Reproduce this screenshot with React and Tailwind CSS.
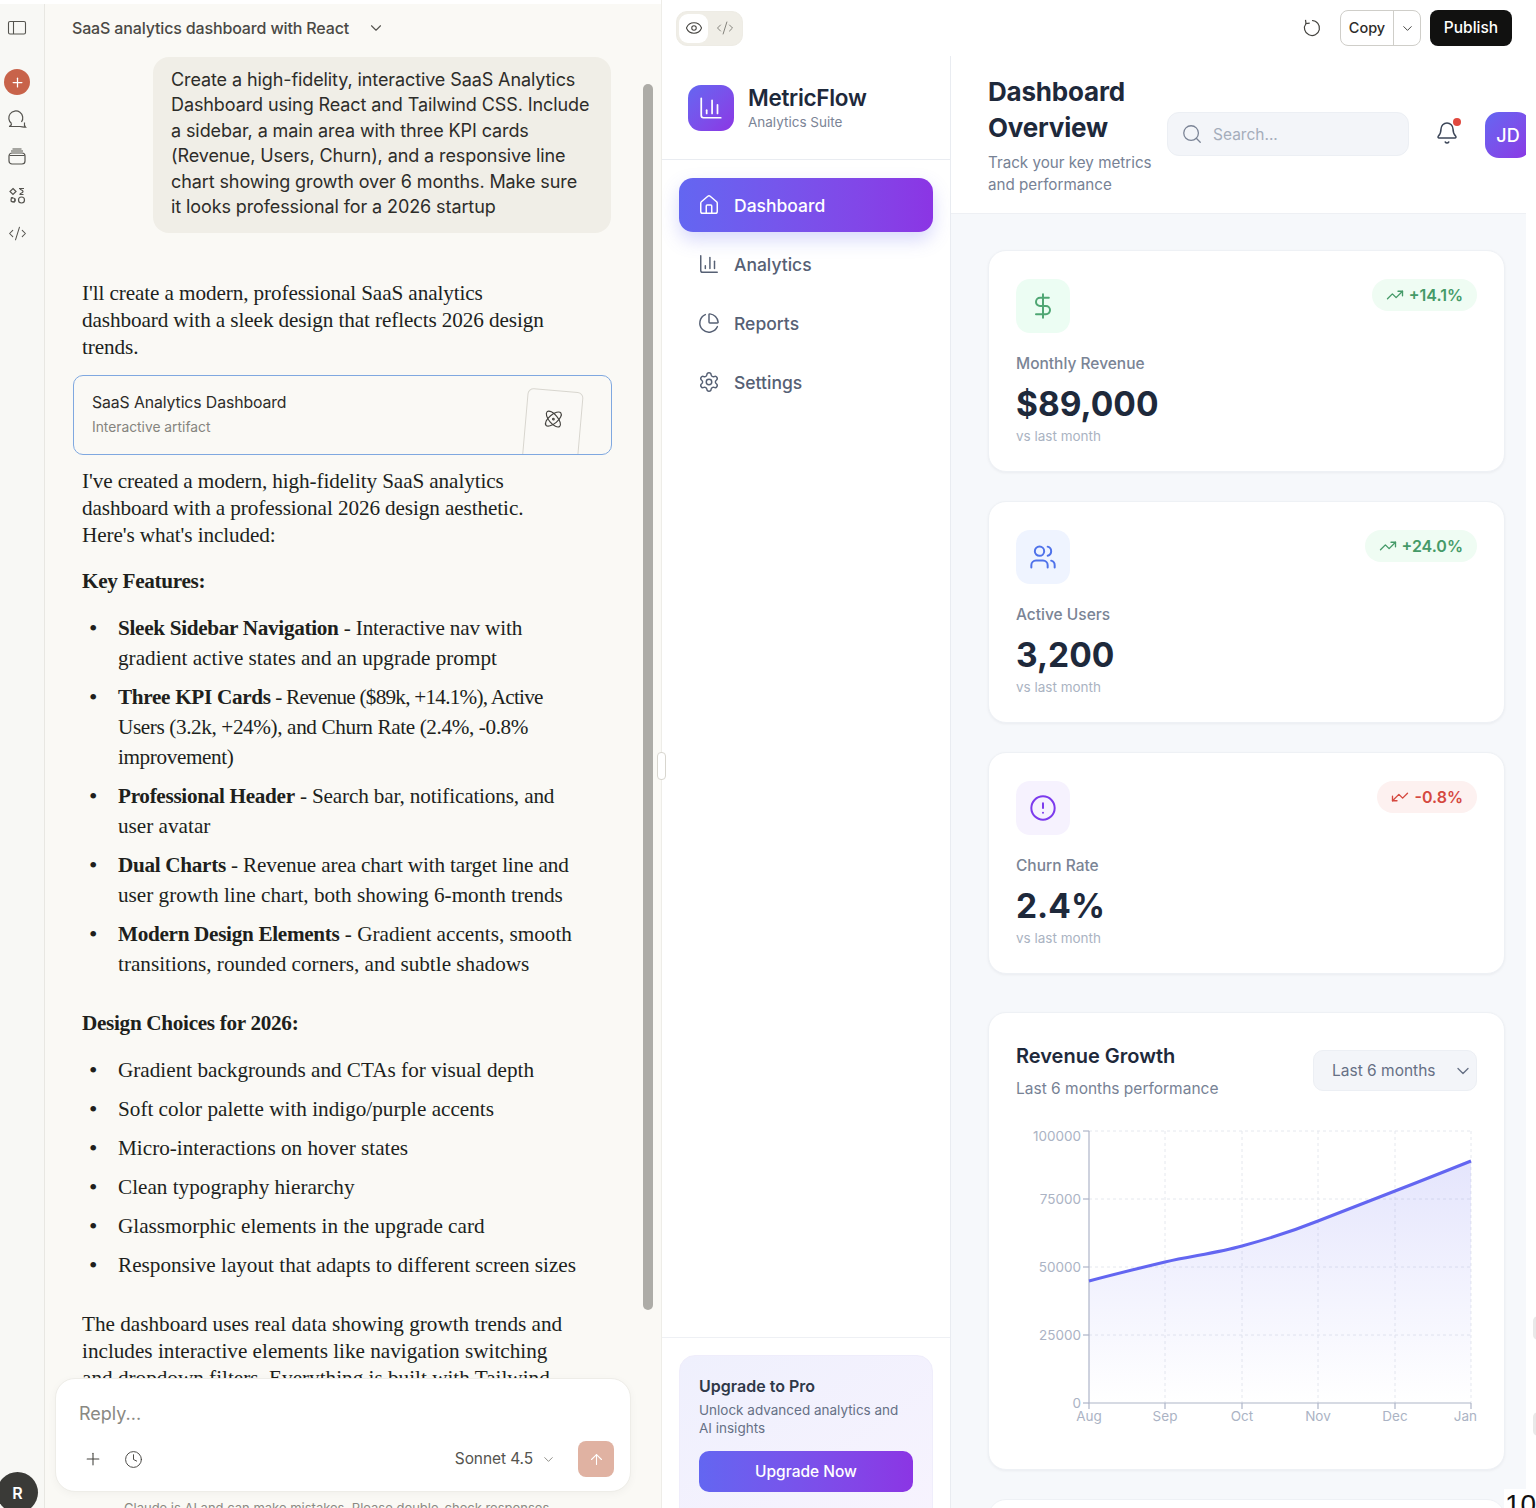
import {
  Atom,
  BarChart3,
  Bell,
  ChevronDown,
  Clock,
  CodeXml,
  DollarSign,
  Eye,
  Home,
  PieChart,
  Plus,
  ArrowUp,
  Search,
  Settings,
  TrendingDown,
  TrendingUp,
  Users,
  AlertCircle,
} from 'lucide-react'

const SERIF = 'font-["Liberation_Serif",serif]'
const SERIF_BOLD = 'font-bold tracking-[-0.31px]'

const promptLines = [
  'Create a high-fidelity, interactive SaaS Analytics',
  'Dashboard using React and Tailwind CSS. Include',
  'a sidebar, a main area with three KPI cards',
  '(Revenue, Users, Churn), and a responsive line',
  'chart showing growth over 6 months. Make sure',
  'it looks professional for a 2026 startup',
]

// tight: the reference's old-style figures run narrower than Liberation's
const features = [
  { bold: 'Sleek Sidebar Navigation', first: ' - Interactive nav with', lead: 'tracking-[-0.15px]', lines: ['gradient active states and an upgrade prompt'], rest: '' },
  { bold: 'Three KPI Cards', first: ' - Revenue ($89k, +14.1%), Active', lead: 'tracking-[-0.75px]', lines: ['Users (3.2k, +24%), and Churn Rate (2.4%, -0.8%', 'improvement)'], rest: 'tracking-[-0.38px]' },
  { bold: 'Professional Header', first: ' - Search bar, notifications, and', lead: 'tracking-[-0.15px]', lines: ['user avatar'], rest: '' },
  { bold: 'Dual Charts', first: ' - Revenue area chart with target line and', lead: 'tracking-[-0.15px]', lines: ['user growth line chart, both showing 6-month trends'], rest: '' },
  { bold: 'Modern Design Elements', first: ' - Gradient accents, smooth', lead: '', lines: ['transitions, rounded corners, and subtle shadows'], rest: '' },
]

const choices = [
  'Gradient backgrounds and CTAs for visual depth',
  'Soft color palette with indigo/purple accents',
  'Micro-interactions on hover states',
  'Clean typography hierarchy',
  'Glassmorphic elements in the upgrade card',
  'Responsive layout that adapts to different screen sizes',
]

const kpis = [
  { label: 'Monthly Revenue', value: '$89,000', change: '+14.1%', Icon: DollarSign, box: 'bg-[#ecfdf3]', icon: 'text-[#4fa673]', pill: 'bg-[#effcf3] text-[#459a68]', Trend: TrendingUp, trendClass: '' },
  { label: 'Active Users', value: '3,200', change: '+24.0%', Icon: Users, box: 'bg-[#eff4ff]', icon: 'text-[#4f72ea]', pill: 'bg-[#effcf3] text-[#459a68]', Trend: TrendingUp, trendClass: '' },
  { label: 'Churn Rate', value: '2.4%', change: '-0.8%', Icon: AlertCircle, box: 'bg-[#f6f2fe]', icon: 'text-[#7c3aed]', pill: 'bg-[#fdf1f0] text-[#d5483f]', Trend: TrendingDown, trendClass: '-scale-x-100' },
]

const navItems = [
  { label: 'Analytics', Icon: BarChart3 },
  { label: 'Reports', Icon: PieChart },
  { label: 'Settings', Icon: Settings },
]

function Bullet({ children }) {
  return (
    <li className="flex">
      <span className="w-[36px] shrink-0 pl-[7px] text-[24px] leading-[30px]">•</span>
      <div className="whitespace-nowrap">{children}</div>
    </li>
  )
}

function Rail() {
  return (
    <div className="w-[45px] shrink-0 h-full bg-[#f8f8f5] border-r border-[#e8e7e2] flex flex-col items-center pr-[10px] text-[#55544f]">
      <svg className="mt-[14px]" width="20" height="20" viewBox="0 0 20 20" fill="none" stroke="currentColor" strokeWidth="1.1">
        <rect x="1.5" y="3.5" width="17" height="12.5" rx="1.5" />
        <path d="M6.5 3.5V16" />
      </svg>
      <div className="mt-[31px] w-[26px] h-[26px] rounded-full bg-[#c8634a] flex items-center justify-center">
        <Plus size={15} className="text-white" strokeWidth={2} />
      </div>
      <svg className="mt-[14px]" width="20" height="20" viewBox="0 0 20 20" fill="none" stroke="currentColor" strokeWidth="1.2">
        <path d="M4.5 14.5A7 7 0 1 1 14.5 13" />
        <path d="M2 17.5c1.6-.3 2.5-1.5 2.5-3M2 17.5h11c1.5 0 3.5.7 5.5.7-1-1-1.3-3-1-4.7" />
      </svg>
      <svg className="mt-[18px]" width="20" height="20" viewBox="0 0 20 20" fill="none" stroke="currentColor" strokeWidth="1.2">
        <rect x="2" y="6" width="16" height="11" rx="3" />
        <path d="M2.5 8.5h15M4 4h12M5.5 2h9" />
      </svg>
      <svg className="mt-[19px]" width="20" height="20" viewBox="0 0 20 20" fill="none" stroke="currentColor" strokeWidth="1.2">
        <path d="M6 2.5 9 5.5 6 8.5 3 5.5Z" />
        <path d="M12 2.5h5M12.5 8.5h4M13 2.5c0 2 3 1 3 3s-3 1-3 3" />
        <circle cx="6" cy="14" r="2" />
        <path d="M4 12.5a1.5 1.5 0 0 1 2-.8M8 12.5v3M3.8 15.5l4.2.5" />
        <circle cx="14.5" cy="14" r="3" />
      </svg>
      <CodeXml className="mt-[18px]" size={19} strokeWidth={1.3} />
    </div>
  )
}

function ChatPanel() {
  return (
    <div className="relative flex-1 h-full bg-[#faf9f5] overflow-hidden text-[#1f1e1b]">
      <div className="h-[53px] pb-[6px] flex items-center pl-[27px] font-['Inter',sans-serif] text-[#4a4945]">
        <span className="text-[16px] font-medium tracking-[-0.15px]">SaaS analytics dashboard with React</span>
        <ChevronDown className="ml-[18px] text-[#55544f]" size={18} strokeWidth={1.5} />
      </div>

      <div className="pl-[37px] pr-[49px]">
        <div className="ml-[71px] w-[458px] pl-[18px] pt-[10px] pb-[14px] bg-[#f0eee7] rounded-[16px] font-['Inter',sans-serif] text-[18px] leading-[25.4px] text-[#2d2c29] whitespace-nowrap tracking-[-0.1px]">
          {promptLines.map((l) => (
            <div key={l}>{l}</div>
          ))}
        </div>

        <div className={`${SERIF} text-[21.2px] text-[#201f1c]`}>
          <p className="mt-[47px] leading-[27px] whitespace-nowrap tracking-[-0.1px]">
            I'll create a modern, professional SaaS analytics
            <br />
            dashboard with a sleek design that reflects 2026 design
            <br />
            trends.
          </p>

          <div className="relative mt-[14px] -ml-[9px] w-[539px] h-[80px] rounded-[10px] border border-[#7fa8e0] overflow-hidden font-['Inter',sans-serif]">
            <div className="pl-[18px] pt-[17px] text-[15.8px] leading-[20px] text-[#2d2c29] tracking-[-0.1px]">SaaS Analytics Dashboard</div>
            <div className="pl-[18px] mt-[5px] text-[13.8px] leading-[18px] text-[#85847e]">Interactive artifact</div>
            <div className="absolute left-[450px] top-[14px] w-[56px] h-[90px] rotate-[5deg] rounded-[6px] border border-[#d8d6cf] bg-[#faf9f6] flex justify-center pt-[18px]">
              <Atom size={20} strokeWidth={1.4} className="text-[#44433f]" />
            </div>
          </div>

          <p className="mt-[13px] leading-[27px] whitespace-nowrap tracking-[-0.1px]">
            I've created a modern, high-fidelity SaaS analytics
            <br />
            dashboard with a professional 2026 design aesthetic.
            <br />
            Here's what's included:
          </p>

          <p className={`mt-[19px] leading-[27px] ${SERIF_BOLD}`}>Key Features:</p>

          <ul className="mt-[18px] flex flex-col gap-[9px] leading-[30px]">
            {features.map((f) => (
              <Bullet key={f.bold}>
                <b className={SERIF_BOLD}>{f.bold}</b>
                <span className={f.lead}>{f.first}</span>
                {f.lines.map((l) => (
                  <div key={l} className={f.rest}>{l}</div>
                ))}
              </Bullet>
            ))}
          </ul>

          <p className={`mt-[31px] leading-[27px] ${SERIF_BOLD}`}>Design Choices for 2026:</p>

          <ul className="mt-[18px] flex flex-col gap-[9px] leading-[30px]">
            {choices.map((c) => (
              <Bullet key={c}>{c}</Bullet>
            ))}
          </ul>

          <p className="mt-[31px] leading-[27px] whitespace-nowrap">
            The dashboard uses real data showing growth trends and
            <br />
            includes interactive elements like navigation switching
            <br />
            and dropdown filters. Everything is built with Tailwind
          </p>
        </div>
      </div>

      {/* scrollbar sits over the conversation */}
      <div className="absolute left-[598px] top-[80px] w-[10px] h-[1226px] rounded-full bg-[#adaca7]" />

      <div className="absolute left-[10px] top-[1374px] w-[576px] h-[114px] rounded-[20px] bg-white border border-[#eeede8] shadow-[0_2px_8px_rgba(0,0,0,0.04)] font-['Inter',sans-serif]">
        <div className="pl-[23px] pt-[23px] text-[18px] leading-[24px] text-[#8a8983]">Reply...</div>
        <div className="mt-[15px] pl-[27px] pr-[16px] flex items-center">
          <Plus size={20} strokeWidth={1.3} className="text-[#44433f]" />
          <Clock size={19} strokeWidth={1.2} className="ml-[21px] text-[#44433f]" />
          <span className="ml-auto text-[15.5px] text-[#55544f] tracking-[-0.1px]">Sonnet 4.5</span>
          <ChevronDown size={15} strokeWidth={1.3} className="ml-[8px] text-[#77766f]" />
          <div className="ml-[22px] w-[36px] h-[36px] rounded-[8px] bg-[#e0b2a2] flex items-center justify-center">
            <ArrowUp size={17} strokeWidth={1.5} className="text-white" />
          </div>
        </div>
      </div>
      <div className="absolute left-[79px] top-[1495px] text-[13px] leading-[18px] text-[#8a8983] font-['Inter',sans-serif] whitespace-nowrap">
        Claude is AI and can make mistakes. Please double-check responses.
      </div>
    </div>
  )
}

function TopBar() {
  return (
    <div className="h-[56px] shrink-0 bg-white flex items-center pl-[14px] pr-[24px] font-['Inter',sans-serif]">
      <div className="w-[67px] h-[35px] rounded-[11px] bg-[#f0eee7] border border-[#eeece5] flex items-center pl-[2px]">
        <div className="w-[29px] h-[29px] rounded-[9px] bg-white flex items-center justify-center">
          <Eye size={18} strokeWidth={1.4} className="text-[#44433f]" />
        </div>
        <CodeXml size={18} strokeWidth={1.2} className="ml-[8px] text-[#77766f]" />
      </div>
      <svg className="ml-auto text-[#44433f]" width="20" height="20" viewBox="0 0 20 20" fill="none" stroke="currentColor" strokeWidth="1.2">
        <path d="M10 2.5a7.5 7.5 0 1 1-6 3" />
        <path d="M3.5 1.8 4 5.5l3.7-.4" />
      </svg>
      <div className="ml-[18px] w-[81px] h-[36px] rounded-[8px] border border-[#cfcec9] flex text-[#2d2c29]">
        <div className="w-[53px] flex items-center justify-center text-[14.5px] font-medium border-r border-[#cfcec9]">Copy</div>
        <div className="flex-1 flex items-center justify-center">
          <ChevronDown size={15} strokeWidth={1.4} />
        </div>
      </div>
      <div className="ml-[9px] w-[82px] h-[36px] rounded-[8px] bg-[#111110] text-white flex items-center justify-center text-[15.5px] font-medium">Publish</div>
    </div>
  )
}

function Sidebar() {
  return (
    <div className="w-[289px] shrink-0 bg-white border-r border-[#e9ecf1] flex flex-col">
      <div className="h-[104px] shrink-0 border-b border-[#e9ecf1] flex items-center pl-[26px]">
        <div className="w-[46px] h-[46px] rounded-[13px] bg-gradient-to-br from-[#6366f1] to-[#8b35e4] flex items-center justify-center">
          <BarChart3 size={26} strokeWidth={1.6} className="text-white" />
        </div>
        <div className="ml-[14px]">
          <div className="text-[22.5px] leading-[28px] font-semibold text-[#1e293b] tracking-[-0.3px]">MetricFlow</div>
          <div className="text-[13.5px] leading-[18px] mt-[1px] text-[#7b8496]">Analytics Suite</div>
        </div>
      </div>

      <nav className="flex-1 px-[17px] pt-[18px] flex flex-col gap-[5px]">
        <div className="h-[54px] rounded-[14px] bg-gradient-to-r from-[#6366f1] to-[#8b35e4] shadow-[0_8px_18px_rgba(99,102,241,0.25)] flex items-center pl-[19px] text-white">
          <Home size={22} strokeWidth={1.6} />
          <span className="ml-[14px] mt-[2px] text-[17.5px] font-medium">Dashboard</span>
        </div>
        {navItems.map(({ label, Icon }) => (
          <div key={label} className="h-[54px] flex items-center pl-[19px] text-[#566074]">
            <Icon size={22} strokeWidth={1.6} />
            <span className="ml-[14px] mt-[2px] text-[17.5px] font-medium">{label}</span>
          </div>
        ))}
      </nav>

      <div className="h-[171px] shrink-0 border-t border-[#eef0f4] px-[17px] pt-[17px]">
        <div className="h-[170px] rounded-[16px] border border-[#efedfb] bg-gradient-to-br from-[#eff0fd] to-[#f7f3fe] px-[19px] pt-[20px]">
          <div className="text-[16px] leading-[20px] font-semibold text-[#2f3848]">Upgrade to Pro</div>
          <div className="mt-[5px] text-[13.5px] leading-[18px] text-[#667085]">
            Unlock advanced analytics and
            <br />
            AI insights
          </div>
          <div className="mt-[14px] h-[41px] rounded-[10px] bg-gradient-to-r from-[#6366f1] to-[#8b35e4] flex items-center justify-center text-white text-[15.5px] font-medium">Upgrade Now</div>
        </div>
      </div>
    </div>
  )
}

function KpiCard({ kpi }) {
  const { Icon, Trend } = kpi
  return (
    <div className="h-[222px] shrink-0 rounded-[18px] bg-white border border-[#eef1f5] shadow-[0_1px_3px_rgba(15,23,42,0.05)] pl-[27px] pr-[27px] pt-[27px]">
      <div className="flex items-start justify-between">
        <div className={`w-[54px] h-[54px] rounded-[14px] flex items-center justify-center ${kpi.box}`}>
          <Icon size={28} strokeWidth={1.7} className={kpi.icon} />
        </div>
        <div className={`h-[32px] px-[14px] rounded-full flex items-center gap-[5px] text-[16px] font-semibold ${kpi.pill}`}>
          <Trend size={18} strokeWidth={1.8} className={kpi.trendClass} />
          {kpi.change}
        </div>
      </div>
      <div className="mt-[21px] text-[15.5px] leading-[20px] font-medium text-[#7a8495]">{kpi.label}</div>
      <div className="mt-[10px] text-[33.5px] leading-[40px] font-bold text-[#1e293b]">{kpi.value}</div>
      <div className="mt-[2px] text-[13.5px] leading-[20px] text-[#aab3c2]">vs last month</div>
    </div>
  )
}

// chart coords are the card's own: x 0 = card text edge, y 3 = 100000
const pts = [
  [73, 153],
  [149, 134],
  [226, 118],
  [302, 93],
  [379, 63],
  [455, 33],
]
const linePath = 'M73 153C99 146 124 140 149 134C175 128 201 125 226 118C252 111 277 103 302 93C328 83 354 73 379 63C405 53 430 43 455 33'

function RevenueChart() {
  const ticks = [
    { y: 275, label: '0', ty: 280 },
    { y: 207, label: '25000', ty: 212 },
    { y: 139, label: '50000', ty: 144 },
    { y: 71, label: '75000', ty: 76 },
    { y: 3, label: '100000', ty: 13 },
  ]
  return (
    <svg className="mt-[29px] block" width="461" height="300" viewBox="0 0 461 300" fontFamily="Inter, sans-serif">
      <defs>
        <linearGradient id="rev" x1="0" y1="0" x2="0" y2="1">
          <stop offset="0%" stopColor="#6366f1" stopOpacity="0.17" />
          <stop offset="100%" stopColor="#6366f1" stopOpacity="0" />
        </linearGradient>
      </defs>
      <g stroke="#e5e8ee" strokeDasharray="3 3">
        {ticks.slice(1).map((t) => (
          <path key={t.y} d={`M73 ${t.y}H455`} />
        ))}
        {pts.slice(1).map(([x]) => (
          <path key={x} d={`M${x} 3V275`} />
        ))}
      </g>
      <path d={`${linePath}V275H73Z`} fill="url(#rev)" />
      <g stroke="#aeb5c8" strokeWidth="1.2">
        <path d="M73 3V275H455" fill="none" />
        {ticks.map((t) => (
          <path key={t.y} d={`M67 ${t.y}H73`} />
        ))}
        {pts.map(([x]) => (
          <path key={x} d={`M${x} 275V281`} />
        ))}
      </g>
      <path d={linePath} fill="none" stroke="#6366f1" strokeWidth="3" />
      <g fill="#abb3c4" fontSize="13.5">
        {ticks.map((t) => (
          <text key={t.y} x="65" y={t.ty} textAnchor="end">{t.label}</text>
        ))}
        {['Aug', 'Sep', 'Oct', 'Nov', 'Dec'].map((m, i) => (
          <text key={m} x={pts[i][0]} y="293" textAnchor="middle">{m}</text>
        ))}
        <text x="461" y="293" textAnchor="end">Jan</text>
      </g>
    </svg>
  )
}

function Main() {
  return (
    <div className="w-[575px] shrink-0 bg-[#f6f8fb] overflow-hidden flex flex-col">
      <div className="h-[158px] shrink-0 bg-white border-b border-[#eef0f4] flex pl-[37px] overflow-hidden">
        <div className="w-[179px] shrink-0 pt-[18px]">
          <div className="text-[26px] leading-[36px] font-bold text-[#1e293b] tracking-[-0.2px]">
            Dashboard
            <br />
            Overview
          </div>
          <div className="mt-[6px] text-[15.2px] leading-[22px] text-[#778295]">
            Track your key metrics
            <br />
            and performance
          </div>
        </div>
        <div className="mt-[56px] w-[242px] h-[44px] rounded-[12px] bg-[#f3f5f9] border border-[#eceff4] flex items-center pl-[13px] shrink-0">
          <Search size={22} strokeWidth={1.4} className="text-[#7b8496]" />
          <span className="ml-[10px] mt-[2px] text-[15.5px] text-[#a5adbb]">Search...</span>
        </div>
        <div className="relative ml-[26px] mt-[65px] shrink-0 h-[26px]">
          <Bell size={24} strokeWidth={1.5} className="text-[#3c4658]" />
          <div className="absolute left-[18px] -top-[3px] w-[8px] h-[8px] rounded-full bg-[#e0483e]" />
        </div>
        <div className="ml-[26px] mt-[56px] shrink-0 w-[46px] h-[46px] rounded-[14px] bg-gradient-to-br from-[#6366f1] to-[#8b35e4] text-white text-[18px] font-medium flex items-center justify-center">JD</div>
      </div>

      <div className="pt-[36px] pl-[37px] pr-[21px] flex flex-col">
        <div className="flex flex-col gap-[29px] [&>div]:pt-[28px]">
          {kpis.map((k) => (
            <KpiCard key={k.label} kpi={k} />
          ))}
        </div>

        <div className="mt-[38px] h-[458px] shrink-0 rounded-[18px] bg-white border border-[#eef1f5] shadow-[0_1px_3px_rgba(15,23,42,0.05)] pl-[27px] pr-[27px] pt-[29px]">
          <div className="flex items-start justify-between">
            <div>
              <div className="text-[20px] leading-[28px] font-semibold text-[#1e293b]">Revenue Growth</div>
              <div className="mt-[9px] text-[15.5px] leading-[20px] text-[#778295]">Last 6 months performance</div>
            </div>
            <div className="mt-[8px] w-[164px] h-[41px] rounded-[10px] bg-[#f3f5f9] border border-[#eceff4] flex items-center pl-[18px] pr-[3px] text-[15.5px] text-[#667085]">
              Last 6 months
              <ChevronDown size={20} strokeWidth={1.6} className="ml-auto" />
            </div>
          </div>
          <RevenueChart />
        </div>

        <div className="mt-[29px] h-[60px] shrink-0 rounded-[18px] bg-white border border-[#eef1f5]" />
      </div>
    </div>
  )
}

export default function App() {
  return (
    <div className="relative w-[1536px] h-[1508px] overflow-hidden bg-white flex font-['Inter',sans-serif]">
      <div className="w-[661px] shrink-0 h-[1504px] mt-[4px] flex">
        <Rail />
        <ChatPanel />
      </div>
      <div className="flex-1 h-full flex flex-col border-l border-[#eeede8]">
        <TopBar />
        <div className="flex flex-1 min-h-0">
          <Sidebar />
          <Main />
        </div>
      </div>

      {/* drag handle between the two panes */}
      <div className="absolute left-[657px] top-[752px] w-[9px] h-[28px] rounded-[4px] bg-white border border-[#d8d6cf]" />

      {/* user avatar peeking from the corner */}
      <div className="absolute -left-[3px] top-[1472px] w-[41px] h-[41px] rounded-full bg-[#3a3a37] text-white text-[16px] font-semibold flex items-center justify-center">R</div>

      {/* stray bits at the right edge of the capture */}
      <div className="absolute left-[1533px] top-[1316px] w-[10px] h-[24px] rounded-full bg-[#e9e9e9]" />
      <div className="absolute left-[1533px] top-[1412px] w-[10px] h-[24px] rounded-full bg-[#e9e9e9]" />
      <div className="absolute left-[1504px] top-[1489px] w-[32px] h-[19px] bg-white overflow-hidden text-[28px] leading-[32px] text-[#111] pl-[1px] font-['Liberation_Sans',sans-serif]">10</div>
    </div>
  )
}
